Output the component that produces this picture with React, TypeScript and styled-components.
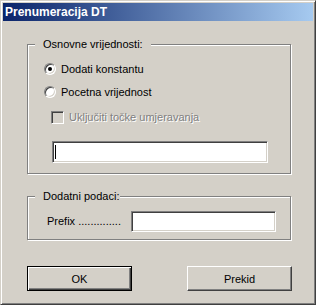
import React from "react";
import styled, { createGlobalStyle } from "styled-components";

const GlobalStyle = createGlobalStyle`
  html, body {
    margin: 0;
    padding: 0;
    background: #d4d0c8;
  }
  body {
    font-family: "Liberation Sans", Arial, sans-serif;
    font-size: 11px;
    color: #000;
  }
`;

const Window = styled.div`
  box-sizing: border-box;
  width: 316px;
  height: 305px;
  padding: 2px;
  background: #d4d0c8;
  border: 1px solid;
  border-color: #d4d0c8 #404040 #404040 #d4d0c8;
  box-shadow: inset 1px 1px 0 #fff, inset -1px -1px 0 #808080;
  display: flex;
  flex-direction: column;
`;

const TitleBar = styled.div`
  height: 18px;
  padding-left: 2px;
  display: flex;
  align-items: center;
  background: linear-gradient(to right, #0a246a, #a6caf0);
  color: #fff;
  font-weight: bold;
  font-size: 12px;
`;

const Body = styled.div`
  padding: 23px 0 0 24px;
  display: flex;
  flex-direction: column;
`;

// etched group box (gray line with white line under/right of it)
const Group = styled.div<{ $h: number; $mt: number; $pt: number; $pl: number }>`
  position: relative;
  box-sizing: border-box;
  width: 264px;
  height: ${(p) => p.$h}px;
  margin-top: ${(p) => p.$mt}px;
  padding: ${(p) => p.$pt}px 0 0 ${(p) => p.$pl}px;
  border: 1px solid #808080;
  box-shadow: 1px 1px 0 #fff, inset 1px 1px 0 #fff;
  display: flex;
  flex-direction: column;
`;

const GroupLabel = styled.span<{ $pr: number }>`
  position: absolute;
  top: -7px;
  left: 7px;
  padding: 0 ${(p) => p.$pr}px 0 8px;
  line-height: 13px;
  background: #d4d0c8;
`;

const Row = styled.div<{ $mt?: number; $ml?: number; $h?: number; $gap?: number }>`
  display: flex;
  align-items: center;
  gap: ${(p) => p.$gap ?? 5}px;
  height: ${(p) => p.$h ?? 12}px;
  margin-top: ${(p) => p.$mt ?? 0}px;
  margin-left: ${(p) => p.$ml ?? 0}px;
  line-height: 13px;
  white-space: nowrap;
`;

const Radio = styled.span<{ $checked?: boolean }>`
  position: relative;
  box-sizing: border-box;
  flex: none;
  width: 12px;
  height: 12px;
  border-radius: 50%;
  border: 1px solid;
  border-color: #808080 #fff #fff #808080;
  background: #fff;
  box-shadow: inset 1px 1px 0 #404040, inset -1px -1px 0 #d4d0c8;
  &::after {
    content: "";
    display: ${(p) => (p.$checked ? "block" : "none")};
    position: absolute;
    left: 3px;
    top: 3px;
    width: 4px;
    height: 4px;
    border-radius: 50%;
    background: #000;
  }
`;

const CheckBox = styled.span`
  box-sizing: border-box;
  flex: none;
  width: 13px;
  height: 13px;
  border: 1px solid;
  border-color: #808080 #fff #fff #808080;
  background: #d4d0c8;
  box-shadow: inset 1px 1px 0 #404040, inset -1px -1px 0 #d4d0c8;
`;

const DisabledText = styled.span`
  color: #808080;
  text-shadow: 1px 1px 0 #fff;
`;

const Edit = styled.div<{ $w: number; $h: number; $mt?: number; $ml?: number }>`
  box-sizing: border-box;
  flex: none;
  width: ${(p) => p.$w}px;
  height: ${(p) => p.$h}px;
  margin-top: ${(p) => p.$mt ?? 0}px;
  margin-left: ${(p) => p.$ml ?? 0}px;
  padding-left: 1px;
  display: flex;
  align-items: center;
  background: #fff;
  border: 1px solid;
  border-color: #808080 #fff #fff #808080;
  box-shadow: inset 1px 1px 0 #404040, inset -1px -1px 0 #d4d0c8;
`;

const Caret = styled.span`
  width: 1px;
  height: 14px;
  margin-left: 1px;
  background: #000;
`;

const FieldLabel = styled.span`
  width: 84px;
  flex: none;
`;

const ButtonRow = styled.div`
  width: 265px;
  margin-top: 26px;
  display: flex;
  justify-content: space-between;
`;

const Button = styled.div<{ $default?: boolean }>`
  box-sizing: border-box;
  width: 105px;
  height: 25px;
  display: flex;
  align-items: center;
  justify-content: center;
  background: #d4d0c8;
  border: 1px solid;
  border-color: ${(p) => (p.$default ? "#000" : "#fff #404040 #404040 #fff")};
  box-shadow: ${(p) =>
    p.$default
      ? "inset 1px 1px 0 #fff, inset -1px -1px 0 #404040, inset -2px -2px 0 #808080"
      : "inset -1px -1px 0 #808080"};
`;

export default function App() {
  return (
    <>
      <GlobalStyle />
      <Window>
        <TitleBar>Prenumeracija DT</TitleBar>
        <Body>
          <Group $h={130} $mt={0} $pt={18} $pl={16}>
            <GroupLabel $pr={8}>Osnovne vrijednosti:</GroupLabel>
            <Row>
              <Radio $checked />
              <span>Dodati konstantu</span>
            </Row>
            <Row $mt={11}>
              <Radio />
              <span>Pocetna vrijednost</span>
            </Row>
            <Row $mt={13} $ml={7} $h={13}>
              <CheckBox />
              <DisabledText>Uključiti točke umjeravanja</DisabledText>
            </Row>
            <Edit $w={216} $h={22} $mt={17} $ml={8}>
              <Caret />
            </Edit>
          </Group>
          <Group $h={44} $mt={22} $pt={14} $pl={19}>
            <GroupLabel $pr={1}>Dodatni podaci:</GroupLabel>
            <Row $h={21} $gap={0}>
              <FieldLabel>Prefix ..............</FieldLabel>
              <Edit $w={145} $h={21} />
            </Row>
          </Group>
          <ButtonRow>
            <Button $default>OK</Button>
            <Button>Prekid</Button>
          </ButtonRow>
        </Body>
      </Window>
    </>
  );
}
